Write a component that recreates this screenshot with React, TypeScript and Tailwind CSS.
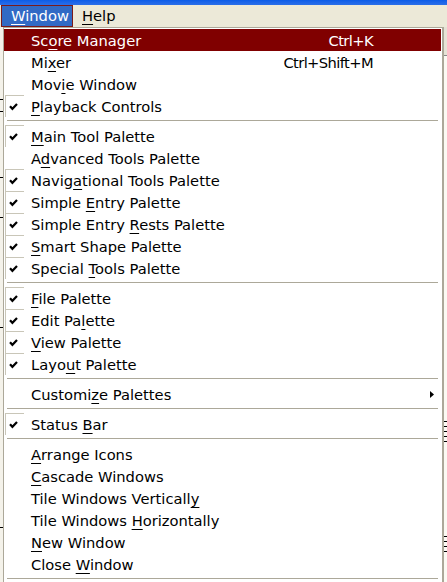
import React from "react";

type Item =
  | { sep: true }
  | {
      sep?: false;
      label: string;
      u: number;
      checked?: boolean;
      shortcut?: string;
      sub?: boolean;
      active?: boolean;
    };

const items: Item[] = [
  { label: "Score Manager", u: 2, shortcut: "Ctrl+K", active: true },
  { label: "Mixer", u: 2, shortcut: "Ctrl+Shift+M" },
  { label: "Movie Window", u: 3 },
  { label: "Playback Controls", u: 0, checked: true },
  { sep: true },
  { label: "Main Tool Palette", u: 0, checked: true },
  { label: "Advanced Tools Palette", u: 1 },
  { label: "Navigational Tools Palette", u: 5, checked: true },
  { label: "Simple Entry Palette", u: 7, checked: true },
  { label: "Simple Entry Rests Palette", u: 13, checked: true },
  { label: "Smart Shape Palette", u: 0, checked: true },
  { label: "Special Tools Palette", u: 8, checked: true },
  { sep: true },
  { label: "File Palette", u: 0, checked: true },
  { label: "Edit Palette", u: 7, checked: true },
  { label: "View Palette", u: 0, checked: true },
  { label: "Layout Palette", u: 4, checked: true },
  { sep: true },
  { label: "Customize Palettes", u: 7, sub: true },
  { sep: true },
  { label: "Status Bar", u: 7, checked: true },
  { sep: true },
  { label: "Arrange Icons", u: 0 },
  { label: "Cascade Windows", u: 0 },
  { label: "Tile Windows Vertically", u: 22 },
  { label: "Tile Windows Horizontally", u: 13 },
  { label: "New Window", u: 0 },
  { label: "Close Window", u: 6 },
  { sep: true },
];

function Label({ text, u }: { text: string; u: number }) {
  return (
    <span className="whitespace-pre">
      {text.slice(0, u)}
      <span className="underline decoration-1 underline-offset-[3px]">{text[u]}</span>
      {text.slice(u + 1)}
    </span>
  );
}

function Check() {
  return (
    <svg width="9" height="8" viewBox="0 0 9 8" className="block">
      <path d="M1 3.2 L3.4 5.8 L8 1" fill="none" stroke="#000" strokeWidth="2.2" />
    </svg>
  );
}

function Ticks({ gaps }: { gaps: number[] }) {
  return (
    <div className="flex flex-col">
      {gaps.map((g, i) => (
        <div key={i} style={{ marginTop: g }} className="h-[1px] w-full bg-black" />
      ))}
    </div>
  );
}

export default function App() {
  const font = { fontFamily: '"DejaVu Sans", "Liberation Sans", sans-serif' };
  return (
    <div className="relative w-[447px] h-[582px] overflow-hidden bg-white flex flex-col" style={font}>
      <div className="h-[5px] shrink-0 bg-gradient-to-b from-[#0a5ce8] to-[#2a6ee8]" />
      <div className="h-[22px] shrink-0 bg-[#ECE9D8] flex items-stretch text-[14.7px]">
        <div className="ml-[1px] w-[72px] bg-[#316AC5] border border-[#7a1a1a] text-white flex items-center pl-[9px] pt-[1px]">
          <Label text="Window" u={0} />
        </div>
        <div className="ml-[9px] flex items-center pt-[1px] text-black">
          <Label text="Help" u={0} />
        </div>
      </div>

      {/* background application window behind the menu */}
      <div className="flex-1 flex">
        <div className="w-[3px] bg-[#f4f2ea]">
          <Ticks gaps={[72, 11, 65, 39, 109, 199]} />
        </div>
        <div className="flex-1" />
        <div className="w-[4px] bg-[#fbfaf3] border-l border-[#ACA899] flex flex-col">
          <div className="h-[29px] bg-[#e6e3d6] border-b border-[#888]" />
          <Ticks gaps={[365, 4, 4, 4, 4, 94, 4, 4, 4]} />
        </div>
      </div>

      {/* dropdown menu */}
      <div className="absolute left-[3px] top-[27px] w-[440px] h-[570px] bg-white border border-[#ACA899] pt-[1px] pr-[1px] text-[14.7px] text-black flex flex-col">
        {items.map((it, i) =>
          it.sep ? (
            <div key={i} className="h-[8px] shrink-0 pt-[3px] px-[3px]">
              <div className="h-[1px] bg-[#ACA899]" />
            </div>
          ) : (
            <div
              key={i}
              className={
                "h-[22px] shrink-0 flex items-stretch " +
                (it.active ? "bg-[#800000] text-white" : "")
              }
            >
              <div className="w-[27px] shrink-0 pl-[1px]">
                {it.checked && (
                  <div className="w-[19px] h-full border-t border-l border-[#c9c6b8] flex items-center pl-[3px]">
                    <Check />
                  </div>
                )}
              </div>
              <div className="flex-1 flex items-center pt-[2px]">
                <Label text={it.label} u={it.u} />
              </div>
              {it.shortcut && (
                <div className="flex items-center pt-[2px] whitespace-pre tracking-[-0.6px]">
                  {it.shortcut}
                </div>
              )}
              <div className="w-[68px] shrink-0 flex items-center pl-[57px]">
                {it.sub && (
                  <svg width="4" height="7" viewBox="0 0 4 7" className="block">
                    <path d="M0 0 L4 3.5 L0 7 Z" fill="#000" />
                  </svg>
                )}
              </div>
            </div>
          )
        )}
      </div>
    </div>
  );
}
